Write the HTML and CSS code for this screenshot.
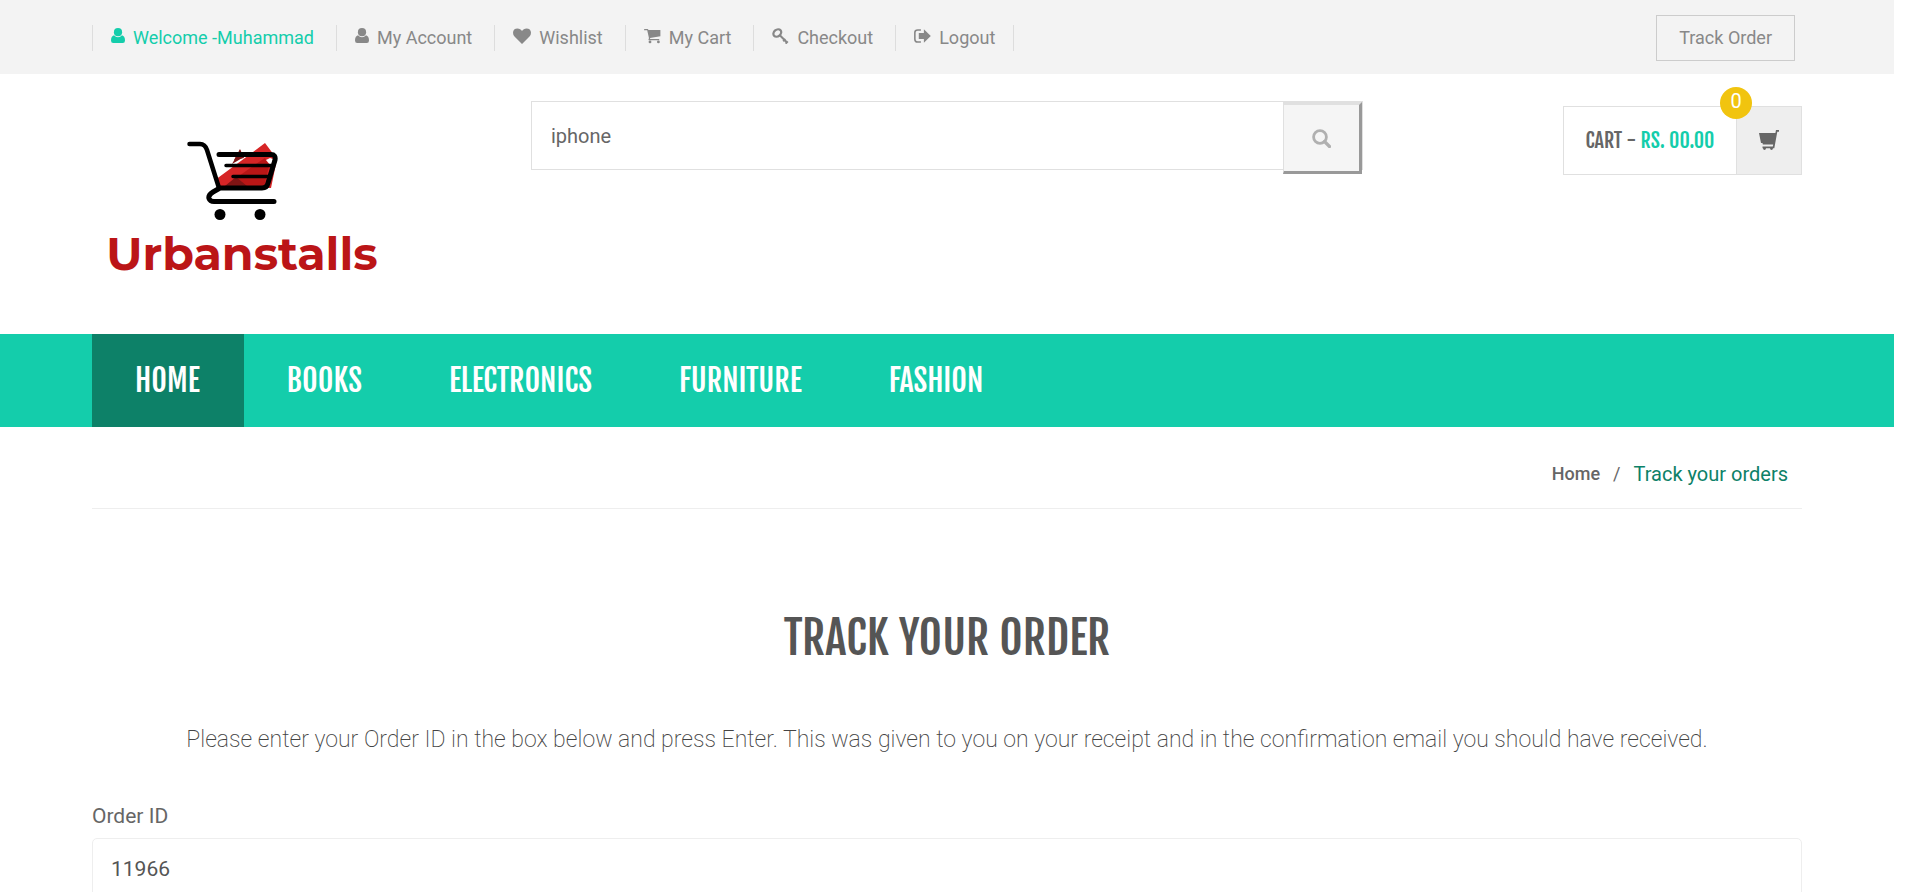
FILE: index.html
```html
<!DOCTYPE html>
<html lang="en">
<head>
<meta charset="utf-8">
<title>Track your orders - Urbanstalls</title>
<link rel="stylesheet" href="styles.css">
</head>
<body>
<svg class="defs" aria-hidden="true">
  <symbol id="user" viewBox="0 0 14 16"><circle cx="7" cy="4.2" r="4.1"/><path d="M3 7.2Q4.700 9.200 7 9.200T11 7.200Q14 8 14 12.500Q14 15 11.800 15H2.200Q0 15 0 12.500Q0 8 3 7.200Z"/></symbol>
  <symbol id="heart" viewBox="0 0 18 16"><path d="M9 16 1.500 8.600Q0 7 0 4.800C0 2 1.800.5 4.500.5 6.500.5 8 1.700 9 3 10 1.700 11.500.5 13.500.5 16.200.5 18 2 18 4.800Q18 7 16.500 8.600Z"/></symbol>
  <symbol id="cart" viewBox="0 0 17 16"><path d="M.6 1H3.600Q4.200 1 4.400 2H16.400V8.300L6 9.900 6.200 11H15.200V12.300H5Q4.300 12.300 4.500 11.300L5 10.200 3.200 2.300H.6Q0 2.300 0 1.700T.6 1Z"/><circle cx="6" cy="13.900" r="1.400"/><circle cx="14.400" cy="13.900" r="1.400"/></symbol>
  <symbol id="key" viewBox="0 0 17 16"><g fill="none" stroke="currentColor" stroke-width="2.300"><ellipse cx="5.300" cy="5" rx="4.200" ry="3.300" transform="rotate(-40 5.300 5)"/><path d="M7.800 7.300 15.300 14.800M11.200 13.200 13.400 11M13.600 15.600 15.800 13.400" stroke-width="2"/></g></symbol>
  <symbol id="logout" viewBox="0 0 16 15"><path d="M6.500 1.800H3.500Q.8 1.800.8 4.300V10.500Q.8 13.200 3.500 13.200H6.500" fill="none" stroke="currentColor" stroke-width="1.500"/><path d="M9.300 1.200 15.800 7.500 9.300 13.800V10.300H4.500V4.700H9.300Z"/></symbol>
  <symbol id="search" viewBox="0 0 19 19"><circle cx="8" cy="8" r="6.400" fill="none" stroke="currentColor" stroke-width="2.800"/><path d="m12.500 12.500 5 5" stroke="currentColor" stroke-width="3.200" stroke-linecap="round"/></symbol>
  <symbol id="basket" viewBox="0 0 20 20"><path d="M17 0H20V1.700H18.300L15.300 18.200H3.500V16.500H13.800L14.200 14.500H3.800L3.500 13H2L0 3H16.400Z"/><circle cx="5.500" cy="18.600" r="1.400"/><circle cx="12.500" cy="18.600" r="1.400"/></symbol>
</svg>

<header>
  <div class="topbar"><div class="container topbar-row">
    <nav aria-label="Account"><ul class="account">
      <li class="welcome"><a href="#"><svg width="14" height="16"><use href="#user"/></svg>Welcome -Muhammad</a></li>
      <li><a href="#"><svg width="14" height="16"><use href="#user"/></svg>My Account</a></li>
      <li><a href="#"><svg width="18" height="16"><use href="#heart"/></svg>Wishlist</a></li>
      <li><a href="#"><svg width="17" height="16"><use href="#cart"/></svg>My Cart</a></li>
      <li><a href="#"><svg width="17" height="16"><use href="#key"/></svg>Checkout</a></li>
      <li><a href="#"><svg width="17" height="16"><use href="#logout"/></svg>Logout</a></li>
    </ul></nav>
    <a class="track" href="#">Track Order</a>
  </div></div>

  <div class="container masthead">
    <a class="logo" href="#">
      <svg width="92" height="82" viewBox="0 0 92 82" aria-hidden="true">
        <path d="M28 40 62 15 78 3 90 19 84 48H32Z" fill="#d62526"/>
        <path d="m38 46 28-20 12-8 4 8-5 21H38Z" fill="#b91616"/>
        <path d="m45 24 8-14 4 7ZM38 46l11-9 11 9Z" fill="#7f1414"/>
        <path d="M28 13H47L53 9 62 14V10L40 6ZM83 18 86 19 84 26 79 20Z" fill="#fff"/>
        <path d="m47 20 6-11 4 9Z" fill="#7f1414"/>
        <path d="M2.500 4H13Q18 4 20 10L32 48" fill="none" stroke="#000" stroke-width="4.500" stroke-linecap="round"/>
        <path d="M32 14.500H84Q89 14.500 88 20L81 43Q80 48 75 48H33L26 52Q21 55 22 58.500 23 61.500 27 61.500H87" fill="none" stroke="#000" stroke-width="5" stroke-linecap="round" stroke-linejoin="round"/>
        <path d="M39 25.500H84M46 36.500H82" stroke="#000" stroke-width="3.500" stroke-linecap="round"/>
        <g fill="#000"><circle cx="33" cy="74.500" r="5.500"/><circle cx="73" cy="74.500" r="5.500"/></g>
      </svg>
      <span>Urbanstalls</span>
    </a>
    <form class="search" role="search">
      <input type="text" aria-label="Search" value="iphone">
      <button type="button" aria-label="Search"><svg width="19" height="19"><use href="#search"/></svg></button>
    </form>
    <button class="cart" type="button">
      <span class="total">CART - <b>RS. 00.00</b></span>
      <span class="cart-icon"><svg width="20" height="20"><use href="#basket"/></svg><span class="count">0</span></span>
    </button>
  </div>

  <nav class="mainnav" aria-label="Main"><div class="container"><ul>
    <li><a class="active" href="#">HOME</a></li>
    <li><a href="#">BOOKS</a></li>
    <li><a href="#">ELECTRONICS</a></li>
    <li><a href="#">FURNITURE</a></li>
    <li><a href="#">FASHION</a></li>
  </ul></div></nav>
</header>

<main class="container">
  <ol class="breadcrumb"><li><a href="#">Home</a></li><li>/</li><li class="here">Track your orders</li></ol>
  <h1>TRACK YOUR ORDER</h1>
  <p class="lead">Please enter your Order ID in the box below and press Enter. This was given to you on your receipt and in the confirmation email you should have received.</p>
  <form>
    <label for="order">Order ID</label>
    <input class="field" id="order" type="text" value="11966">
  </form>
</main>
</body>
</html>
```
FILE: styles.css
```css
* { box-sizing: border-box; }
html { overflow: hidden; }
body { margin: 0; padding-right: 26px; background: #fff; color: #666; font: 18px/26px Roboto, sans-serif; }
ul, ol { margin: 0; padding: 0; list-style: none; display: flex; }
a { color: inherit; text-decoration: none; }
svg { fill: currentColor; flex: none; }
.defs { display: none; }
.container { margin: 0 92px; }

.topbar { background: #f3f3f3; color: #888; }
.topbar-row { display: flex; justify-content: space-between; align-items: center; height: 74px; padding: 2px 7px 0 0; }
.account { border-left: 1px solid #ddd; }
.account li { padding: 0 22px 0 18px; border-right: 1px solid #ddd; }
.account li:last-child { padding-right: 18px; }
.account a { display: flex; gap: 8px; }
.account svg { margin-top: 3px; }
.welcome { color: #14cdab; }
.track { padding: 9px 22px; border: 1px solid #ccc; }

.masthead { display: grid; grid-template-columns: 439fr 832fr 200fr 239px; align-items: start; height: 260px; }
.logo { display: flex; flex-direction: column; width: 300px; padding-top: 66px; align-items: center; color: #bb1517; font: bold 46px/56px Montserrat, Inter, sans-serif; }
.logo svg { margin-right: 18px; }
.logo span { margin-top: 4px; }
.search { display: flex; height: 69px; margin-top: 27px; border: 1px solid #e0e0e0; }
.search input { flex: 1; min-width: 0; padding: 0 19px; border: 0; color: #666; font: 20px Roboto, sans-serif; }
.search button { width: 79px; height: 72px; padding: 0; border: 3px solid #e0e0e0; border-left-width: 1px; border-right-color: #999; border-bottom-color: #999; background: #f5f5f5; color: #b0b0b0; }
.search button svg { vertical-align: middle; }
.cart { grid-column: 4; display: flex; height: 69px; margin-top: 32px; padding: 0; border: 1px solid #e0e0e0; background: #fff; color: #666; font: 20px/67px "Fjalla One", "Liberation Sans Narrow", sans-serif; }
.total { flex: 1; white-space: nowrap; }
.total b { color: #14cdab; font-weight: 400; }
.cart-icon { position: relative; display: flex; width: 65px; height: 67px; padding-bottom: 2px; align-items: center; justify-content: center; border-left: 1px solid #e0e0e0; background: #eee; }
.count { position: absolute; top: -20px; left: -17px; width: 32px; height: 32px; border-radius: 50%; background: #f1c40f; color: #fff; font: 20px/28px Roboto, sans-serif; }

.mainnav { background: #14cdab; color: #fff; font: 30px/93px "Fjalla One", "Liberation Sans Narrow", sans-serif; }
.mainnav a { display: block; padding: 0 44px 0 43px; }
.mainnav .active { background: #0d8168; }

.breadcrumb { justify-content: flex-end; gap: 13px; height: 82px; padding: 34px 14px 0 0; border-bottom: 1px solid #eee; }
.breadcrumb a { font-weight: 500; }
.here { color: #0d8168; font-size: 20px; }
h1 { margin: 93px 0 0; color: #555; font: 45px/72px "Fjalla One", "Liberation Sans Narrow", sans-serif; text-align: center; }
.lead { margin: 49px 0 44px; color: #444; font-size: 23px; font-weight: 200; line-height: 34px; text-align: center; }
label { display: block; margin-bottom: 7px; font-size: 21px; line-height: 30px; }
.field { display: block; width: 100%; height: 62px; padding: 0 18px; border: 1px solid #eee; border-radius: 5px; color: #555; font: 21px Roboto, sans-serif; }
```
